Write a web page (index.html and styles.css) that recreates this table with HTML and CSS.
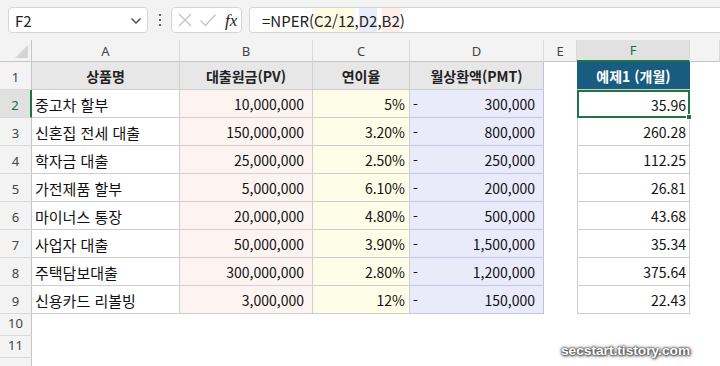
FILE: index.html
```html
<!DOCTYPE html>
<html lang="ko">
<head>
<meta charset="utf-8">
<link rel="stylesheet" href="styles.css">
</head>
<body>
<div class="app">
  <div class="toolbar">
    <div class="namebox">
      <span class="name">F2</span>
      <svg class="chev" width="12" height="8" viewBox="0 0 12 8"><path d="M1.5 1.5 L6 6 L10.5 1.5" fill="none" stroke="#444" stroke-width="1.3"/></svg>
    </div>
    <div class="dots"><i></i><i></i><i></i></div>
    <div class="fxbox">
      <svg width="16" height="16" viewBox="0 0 16 16"><path d="M2 2 L14 14 M14 2 L2 14" stroke="#c4c4c4" stroke-width="1.3" fill="none"/></svg>
      <svg width="18" height="16" viewBox="0 0 18 16"><path d="M1.5 8.5 L6.5 13.5 L16.5 2.5" stroke="#c4c4c4" stroke-width="1.3" fill="none"/></svg>
      <span class="fx">fx</span>
    </div>
    <div class="formula">
      <span class="ft">=NPER(</span><span class="ft hl-y">C2/12</span><span class="ft">,</span><span class="ft hl-b">D2</span><span class="ft">,</span><span class="ft hl-p">B2</span><span class="ft">)</span>
    </div>
  </div>

  <div class="sheet">
    <div class="corner"><span class="tri"></span></div>
    <div class="ch">A</div>
    <div class="ch">B</div>
    <div class="ch">C</div>
    <div class="ch">D</div>
    <div class="ch">E</div>
    <div class="ch ch-sel">F</div>
    <div class="ch"></div>

    <div class="rh">1</div>
    <div class="t th">상품명</div>
    <div class="t th">대출원금(PV)</div>
    <div class="t th">연이율</div>
    <div class="t th tdb">월상환액(PMT)</div>
    <div class="c"></div>
    <div class="fh">예제1 (개월)</div>
    <div class="c"></div>

    <div class="rh rh-sel">2</div>
    <div class="t ta">중고차 할부</div>
    <div class="t tb">10,000,000</div>
    <div class="t tc">5%</div>
    <div class="t td"><span>-</span><span>300,000</span></div>
    <div class="c"></div>
    <div class="t tf sel">35.96<span class="handle"></span></div>
    <div class="c"></div>

    <div class="rh">3</div>
    <div class="t ta">신혼집 전세 대출</div>
    <div class="t tb">150,000,000</div>
    <div class="t tc">3.20%</div>
    <div class="t td"><span>-</span><span>800,000</span></div>
    <div class="c"></div>
    <div class="t tf">260.28</div>
    <div class="c"></div>

    <div class="rh">4</div>
    <div class="t ta">학자금 대출</div>
    <div class="t tb">25,000,000</div>
    <div class="t tc">2.50%</div>
    <div class="t td"><span>-</span><span>250,000</span></div>
    <div class="c"></div>
    <div class="t tf">112.25</div>
    <div class="c"></div>

    <div class="rh">5</div>
    <div class="t ta">가전제품 할부</div>
    <div class="t tb">5,000,000</div>
    <div class="t tc">6.10%</div>
    <div class="t td"><span>-</span><span>200,000</span></div>
    <div class="c"></div>
    <div class="t tf">26.81</div>
    <div class="c"></div>

    <div class="rh">6</div>
    <div class="t ta">마이너스 통장</div>
    <div class="t tb">20,000,000</div>
    <div class="t tc">4.80%</div>
    <div class="t td"><span>-</span><span>500,000</span></div>
    <div class="c"></div>
    <div class="t tf">43.68</div>
    <div class="c"></div>

    <div class="rh">7</div>
    <div class="t ta">사업자 대출</div>
    <div class="t tb">50,000,000</div>
    <div class="t tc">3.90%</div>
    <div class="t td"><span>-</span><span>1,500,000</span></div>
    <div class="c"></div>
    <div class="t tf">35.34</div>
    <div class="c"></div>

    <div class="rh">8</div>
    <div class="t ta">주택담보대출</div>
    <div class="t tb">300,000,000</div>
    <div class="t tc">2.80%</div>
    <div class="t td"><span>-</span><span>1,200,000</span></div>
    <div class="c"></div>
    <div class="t tf">375.64</div>
    <div class="c"></div>

    <div class="rh">9</div>
    <div class="t ta">신용카드 리볼빙</div>
    <div class="t tb">3,000,000</div>
    <div class="t tc">12%</div>
    <div class="t td"><span>-</span><span>150,000</span></div>
    <div class="c"></div>
    <div class="t tf">22.43</div>
    <div class="c"></div>

    <div class="rh">10</div>
    <div class="c"></div><div class="c"></div><div class="c"></div><div class="c"></div><div class="c"></div><div class="c"></div><div class="c"></div>

    <div class="rh">11</div>
    <div class="c"></div><div class="c"></div><div class="c"></div><div class="c"></div><div class="c"></div><div class="c"></div><div class="c"></div>

    <div class="rh"></div>
    <div class="c"></div><div class="c"></div><div class="c"></div><div class="c"></div><div class="c"></div><div class="c"></div><div class="c"></div>
  </div>

  <div class="watermark">secstart.tistory.com</div>
</div>
</body>
</html>
```

FILE: styles.css
```css
* { box-sizing: border-box; }
html, body { margin: 0; padding: 0; }
body {
  width: 720px;
  height: 366px;
  overflow: hidden;
  background: #ffffff;
  font-family: "Noto Sans CJK KR", "Noto Sans", sans-serif;
  color: #111;
}
.app { position: relative; width: 720px; height: 366px; overflow: hidden; }

/* toolbar */
.toolbar {
  height: 40px;
  background: #f3f3f3;
  display: flex;
  align-items: flex-start;
  padding-top: 7px;
  padding-left: 8px;
}
.namebox {
  width: 140px;
  height: 26px;
  background: #fff;
  border: 1px solid #d6d6d6;
  border-radius: 4px;
  display: flex;
  align-items: center;
  justify-content: space-between;
  padding: 0 5px 0 6px;
}
.name { font-size: 15px; color: #222; line-height: 1; }
.chev { margin-top: 1px; }
.dots {
  width: 23px;
  height: 26px;
  display: flex;
  flex-direction: column;
  align-items: center;
  justify-content: center;
  gap: 3px;
}
.dots i { display: block; width: 2px; height: 2px; background: #333; border-radius: 1px; }
.fxbox {
  width: 71px;
  height: 26px;
  background: #fff;
  border: 1px solid #d6d6d6;
  border-radius: 4px;
  display: flex;
  align-items: center;
  gap: 6px;
  padding-left: 5px;
  margin-right: 7px;
}
.fx {
  font-family: "Liberation Serif", "DejaVu Serif", serif;
  font-style: italic;
  font-size: 17px;
  color: #222;
  margin-left: 2px;
  line-height: 1;
}
.formula {
  flex: 1;
  height: 26px;
  background: #fff;
  border: 1px solid #d6d6d6;
  border-right: none;
  border-radius: 4px 0 0 4px;
  display: flex;
  align-items: stretch;
  padding-left: 12px;
}
.ft {
  display: flex;
  align-items: center;
  font-size: 15px;
  color: #222;
  line-height: 1;
}
.hl-y { background: #fdfbe3; }
.hl-b { background: #e9ecfb; }
.hl-p { background: #fdeee9; }

/* sheet */
.sheet {
  display: grid;
  grid-template-columns: 32px 148px 133px 97px 134px 33px 113px 30px;
  grid-template-rows: 22px 28px repeat(8, 28px) 22px 22px 22px;
}
.corner {
  background: #f3f3f3;
  border-right: 1px solid #c6c6c6;
  border-bottom: 1px solid #c6c6c6;
  position: relative;
}
.tri {
  position: absolute;
  right: 3px;
  bottom: 3px;
  width: 0;
  height: 0;
  border-left: 13px solid transparent;
  border-bottom: 13px solid #d4d4d4;
}
.ch {
  background: #f3f3f3;
  border-right: 1px solid #d9d9d9;
  border-bottom: 1px solid #c6c6c6;
  display: flex;
  align-items: center;
  justify-content: center;
  font-size: 13px;
  color: #444;
  font-family: "Noto Sans", sans-serif;
}
.ch-sel {
  background: #e1e1e1;
  color: #1e6b40;
  border-bottom: 2px solid #217346;
}
.rh {
  background: #f3f3f3;
  border-right: 1px solid #c6c6c6;
  border-bottom: 1px solid #dadada;
  display: flex;
  align-items: flex-end;
  justify-content: center;
  padding-bottom: 3px;
  font-size: 13px;
  color: #444;
  font-family: "Noto Sans", sans-serif;
}
.rh-sel {
  background: #e1e1e1;
  color: #1e6b40;
  border-right: 2px solid #217346;
}
.c { background: #fff; }

.t {
  border-right: 1px solid #cfcfcf;
  border-bottom: 1px solid #cfcfcf;
  display: flex;
  align-items: center;
  font-size: 14px;
  color: #111;
  white-space: nowrap;
  padding-top: 1px;
}
.th {
  background: #e7e7e7;
  justify-content: center;
  font-weight: bold;
  font-size: 14px;
  color: #222;
}
.ta { font-size: 15px; padding-left: 3px; }
.tb { background: #fdf4f1; justify-content: flex-end; padding-right: 8px; }
.tc { background: #fefee8; justify-content: flex-end; padding-right: 4px; }
.td {
  background: #e9ebfb;
  justify-content: space-between;
  padding-left: 3px;
  padding-right: 8px;
  border-right-color: #bcc1e2;
  border-bottom-color: #c3c7e3;
}
.tdb { border-right-color: #bcc1e2; }
.tf {
  border-left: 1px solid #cfcfcf;
  justify-content: flex-end;
  padding-right: 3px;
  background: #fff;
}
.sel {
  border: 2px solid #217346;
  position: relative;
  padding-right: 2px;
}
.handle {
  position: absolute;
  right: -4px;
  bottom: -4px;
  width: 6px;
  height: 6px;
  background: #217346;
  border: 1px solid #fff;
}
.fh {
  background: #185d80;
  color: #fff;
  font-weight: bold;
  font-size: 14px;
  display: flex;
  align-items: center;
  justify-content: center;
  border-bottom: 1px solid #cfcfcf;
}

.watermark {
  position: absolute;
  left: 561px;
  top: 342px;
  font-family: "Liberation Sans", sans-serif;
  font-weight: bold;
  font-size: 13.7px;
  line-height: 18px;
  color: #fff;
  text-shadow: 0 0 2px #444, 0 0 2px #444, 1px 1px 3px #555, 0 0 4px #777;
}
```
